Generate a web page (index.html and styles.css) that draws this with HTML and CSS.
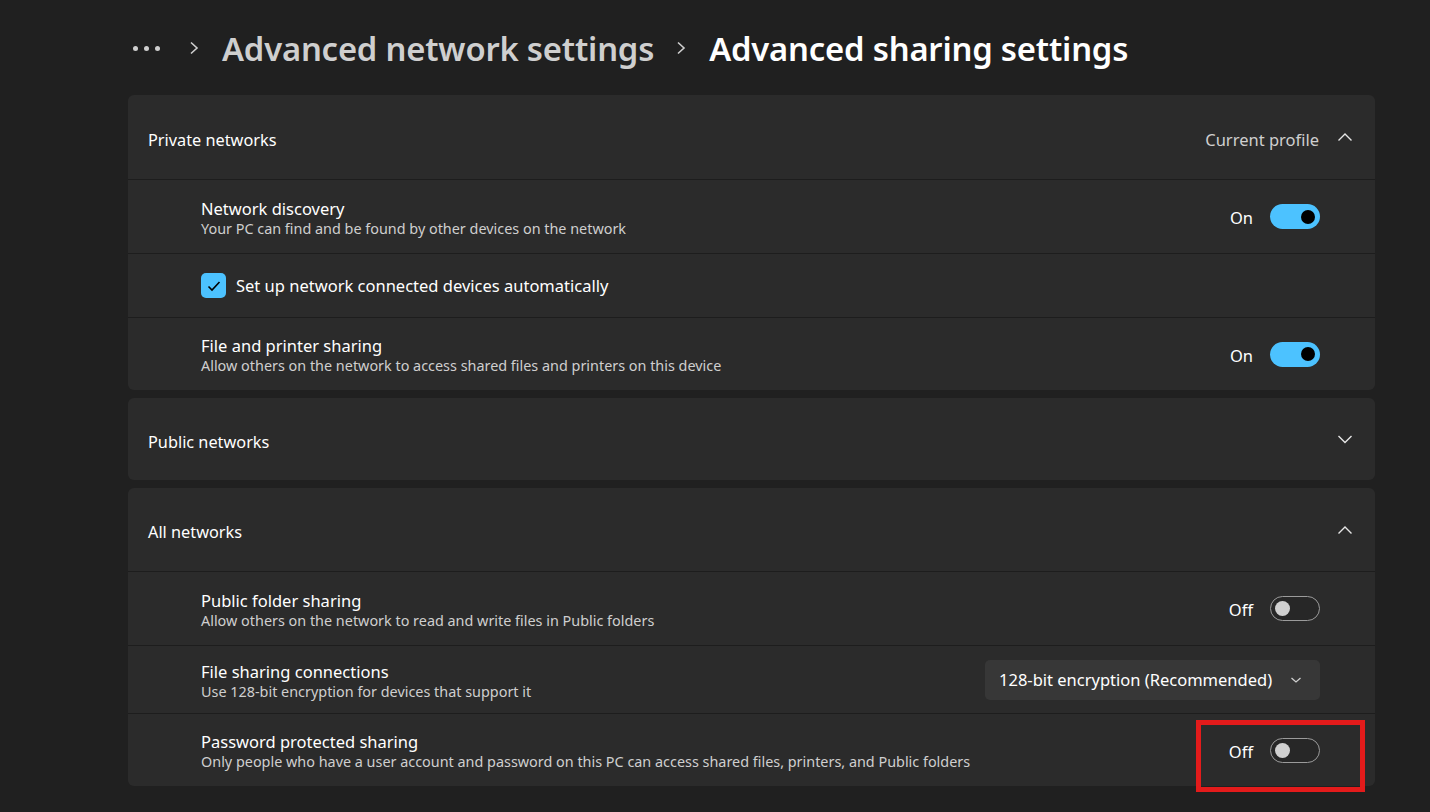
FILE: index.html
```html
<!DOCTYPE html>
<html lang="en">
<head>
<meta charset="utf-8">
<title>Advanced sharing settings</title>
<link rel="stylesheet" href="styles.css">
</head>
<body>
<div class="page">
  <header class="crumbs">
    <span class="dots"><i></i><i></i><i></i></span>
    <svg class="sep" width="12" height="14" viewBox="0 0 12 14"><polyline points="3,1.5 9,7 3,12.5" fill="none" stroke="#cfcfcf" stroke-width="1.6"/></svg>
    <span class="crumb-parent">Advanced network settings</span>
    <svg class="sep" width="12" height="14" viewBox="0 0 12 14"><polyline points="3,1.5 9,7 3,12.5" fill="none" stroke="#cfcfcf" stroke-width="1.6"/></svg>
    <span class="crumb-current">Advanced sharing settings</span>
  </header>

  <section class="card">
    <div class="card-head first">
      <span class="head-title">Private networks</span>
      <span class="head-right">
        <span class="head-note">Current profile</span>
        <svg class="chev" width="16" height="10" viewBox="0 0 16 10"><polyline points="1.5,8.5 8,2 14.5,8.5" fill="none" stroke="#e6e6e6" stroke-width="1.4"/></svg>
      </span>
    </div>
    <div class="row h73">
      <div class="text">
        <div class="title">Network discovery</div>
        <div class="sub">Your PC can find and be found by other devices on the network</div>
      </div>
      <div class="ctrl"><span class="state">On</span><span class="toggle on"><span class="knob"></span></span></div>
    </div>
    <div class="row h63">
      <label class="check">
        <span class="box"><svg width="14" height="12" viewBox="0 0 14 12"><polyline points="1.5,6.5 5,10 12.5,2" fill="none" stroke="#000" stroke-width="1.6"/></svg></span>
        <span class="check-label">Set up network connected devices automatically</span>
      </label>
    </div>
    <div class="row h72 last">
      <div class="text">
        <div class="title">File and printer sharing</div>
        <div class="sub">Allow others on the network to access shared files and printers on this device</div>
      </div>
      <div class="ctrl"><span class="state">On</span><span class="toggle on"><span class="knob"></span></span></div>
    </div>
  </section>

  <section class="card">
    <div class="card-head solo">
      <span class="head-title">Public networks</span>
      <span class="head-right">
        <svg class="chev" width="16" height="10" viewBox="0 0 16 10"><polyline points="1.5,2 8,8.5 14.5,2" fill="none" stroke="#e6e6e6" stroke-width="1.4"/></svg>
      </span>
    </div>
  </section>

  <section class="card">
    <div class="card-head">
      <span class="head-title">All networks</span>
      <span class="head-right">
        <svg class="chev" width="16" height="10" viewBox="0 0 16 10"><polyline points="1.5,8.5 8,2 14.5,8.5" fill="none" stroke="#e6e6e6" stroke-width="1.4"/></svg>
      </span>
    </div>
    <div class="row h73">
      <div class="text">
        <div class="title">Public folder sharing</div>
        <div class="sub">Allow others on the network to read and write files in Public folders</div>
      </div>
      <div class="ctrl"><span class="state">Off</span><span class="toggle off"><span class="knob"></span></span></div>
    </div>
    <div class="row h67">
      <div class="text">
        <div class="title">File sharing connections</div>
        <div class="sub">Use 128-bit encryption for devices that support it</div>
      </div>
      <div class="ctrl">
        <div class="select">
          <span>128-bit encryption (Recommended)</span>
          <svg width="12" height="8" viewBox="0 0 12 8"><polyline points="1.5,2 6,6 10.5,2" fill="none" stroke="#cfcfcf" stroke-width="1.3"/></svg>
        </div>
      </div>
    </div>
    <div class="row h72 last">
      <div class="text">
        <div class="title">Password protected sharing</div>
        <div class="sub">Only people who have a user account and password on this PC can access shared files, printers, and Public folders</div>
      </div>
      <div class="ctrl"><span class="state">Off</span><span class="toggle off"><span class="knob"></span></span></div>
      <span class="highlight"></span>
    </div>
  </section>
</div>
</body>
</html>
```

FILE: styles.css
```css
* { box-sizing: border-box; }
html, body { margin: 0; padding: 0; }
body {
  background: #202020;
  color: #ffffff;
  font-family: "Noto Sans", "Open Sans", sans-serif;
  width: 1430px;
  height: 812px;
  overflow: hidden;
}
.page {
  padding: 0 55px 0 128px;
}
.crumbs {
  display: flex;
  align-items: center;
  height: 95px;
  padding-top: 1px;
}
.dots {
  display: flex;
  gap: 6px;
  margin-left: 5px;
  margin-right: 28px;
}
.dots i {
  width: 5px;
  height: 5px;
  border-radius: 50%;
  background: #cfcfcf;
  display: block;
}
.sep { margin-right: 22px; }
.crumb-parent {
  font-size: 32.8px;
  font-weight: 600;
  color: #cfcfcf;
  margin-right: 21px;
  letter-spacing: -0.2px;
}
.crumb-current {
  font-size: 32.8px;
  font-weight: 600;
  color: #ffffff;
  letter-spacing: -0.2px;
}
.card {
  background: #2b2b2b;
  border-radius: 6px;
  margin-bottom: 8px;
}
.card-head {
  display: flex;
  align-items: center;
  justify-content: space-between;
  height: 84px;
  padding: 5px 22px 0 20px;
  border-bottom: 1px solid #1d1d1d;
}
.card-head.first { height: 85px; }
.card-head.solo { border-bottom: none; height: 82px; }
.head-title { font-size: 16.3px; color: #ffffff; }
.head-right { display: flex; align-items: center; gap: 18px; }
.head-right .chev { margin-top: -5px; }
.head-note { font-size: 16.5px; color: #cfcfcf; }
.row {
  position: relative;
  display: flex;
  align-items: center;
  justify-content: space-between;
  padding: 0 55px 0 73px;
  border-bottom: 1px solid #1d1d1d;
}
.row.last { border-bottom: none; }
.h73 { height: 74px; }
.h63 { height: 64px; }
.h72 { height: 72px; }
.h67 { height: 68px; }
.text { padding-top: 3px; }
.title { font-size: 16.5px; color: #ffffff; line-height: 21px; }
.sub { font-size: 14.4px; color: #cfcfcf; line-height: 20px; }
.ctrl { display: flex; align-items: center; gap: 17px; }
.state { font-size: 16.5px; color: #ffffff; padding-top: 2px; }
.toggle {
  width: 50px;
  height: 25px;
  border-radius: 13px;
  display: flex;
  align-items: center;
  padding: 0 5px;
}
.toggle.on { background: #4cc2ff; justify-content: flex-end; }
.toggle.on .knob { width: 14px; height: 14px; border-radius: 50%; background: #000; }
.toggle.off { border: 1.5px solid #9b9b9b; background: #272727; justify-content: flex-start; padding: 0 4px; }
.toggle.off .knob { width: 15px; height: 15px; border-radius: 50%; background: #d0d0d0; }
.check { display: flex; align-items: center; gap: 10px; }
.box {
  width: 25px;
  height: 25px;
  border-radius: 5px;
  background: #4cc2ff;
  display: flex;
  align-items: center;
  justify-content: center;
}
.check-label { font-size: 16.5px; color: #ffffff; }
.select {
  width: 335px;
  height: 40px;
  background: #373737;
  border-radius: 5px;
  display: flex;
  align-items: center;
  justify-content: space-between;
  padding: 0 18px 0 14px;
  font-size: 16.5px;
  color: #ffffff;
}
.highlight {
  position: absolute;
  left: 1068px;
  top: 6px;
  width: 169px;
  height: 72px;
  border: 5px solid #e31b1b;
}
```
